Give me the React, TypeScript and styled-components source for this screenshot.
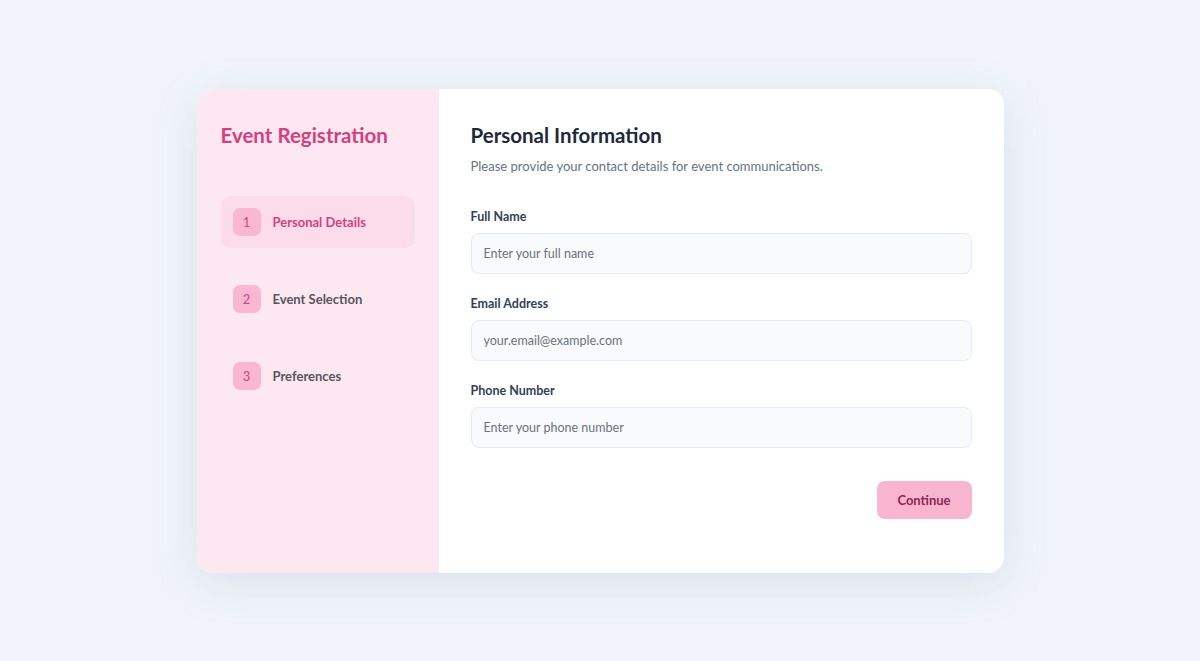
import React from 'react';
import styled, { createGlobalStyle } from 'styled-components';

const GlobalStyle = createGlobalStyle`
  html, body, #root {
    margin: 0;
    height: 100%;
  }
  body {
    background: #f0f4fa;
    font-family: Lato, 'Noto Sans', sans-serif;
  }
  * {
    box-sizing: border-box;
  }
`;

const steps = [
  { n: 1, label: 'Personal Details' },
  { n: 2, label: 'Event Selection' },
  { n: 3, label: 'Preferences' },
];

const fields = [
  { label: 'Full Name', placeholder: 'Enter your full name', type: 'text' },
  { label: 'Email Address', placeholder: 'your.email@example.com', type: 'email' },
  { label: 'Phone Number', placeholder: 'Enter your phone number', type: 'tel' },
];

export default function App() {
  const current = 1;

  return (
    <>
      <GlobalStyle />
      <Page>
        <Card>
          <Sidebar>
            <SideTitle>Event Registration</SideTitle>
            <StepList>
              {steps.map(step => (
                <Step key={step.n} $active={step.n === current}>
                  <Badge>{step.n}</Badge>
                  <StepLabel $active={step.n === current}>{step.label}</StepLabel>
                </Step>
              ))}
            </StepList>
          </Sidebar>
          <Main>
            <Heading>Personal Information</Heading>
            <Subtitle>Please provide your contact details for event communications.</Subtitle>
            <Form onSubmit={e => e.preventDefault()}>
              {fields.map(field => (
                <Field key={field.label}>
                  <Label>{field.label}</Label>
                  <Input type={field.type} placeholder={field.placeholder} />
                </Field>
              ))}
              <Actions>
                <ContinueButton type="submit">Continue</ContinueButton>
              </Actions>
            </Form>
          </Main>
        </Card>
      </Page>
    </>
  );
}

const Page = styled.div`
  min-height: 100%;
  display: flex;
  align-items: center;
  justify-content: center;
`;

const Card = styled.div`
  width: 807px;
  height: 484px;
  display: flex;
  background: #ffffff;
  border-radius: 16px;
  overflow: hidden;
  box-shadow: 0 10px 40px rgba(148, 163, 184, 0.22);
`;

const Sidebar = styled.aside`
  width: 242px;
  flex-shrink: 0;
  background: #fde8f1;
  padding: 32px 24px;
`;

const SideTitle = styled.h1`
  margin: 0;
  font-size: 20.5px;
  line-height: 28px;
  font-weight: 700;
  color: #d63f7e;
`;

const StepList = styled.div`
  margin-top: 47px;
  display: flex;
  flex-direction: column;
  gap: 25px;
`;

const Step = styled.div<{ $active: boolean }>`
  display: flex;
  align-items: center;
  gap: 12px;
  height: 52px;
  padding: 0 12px;
  border-radius: 10px;
  background: ${p => (p.$active ? '#fcdcea' : 'transparent')};
`;

const Badge = styled.span`
  width: 28px;
  height: 28px;
  border-radius: 7px;
  background: #f9b7d1;
  color: #d6437f;
  font-size: 13px;
  display: flex;
  align-items: center;
  justify-content: center;
`;

const StepLabel = styled.span<{ $active: boolean }>`
  font-size: 13px;
  font-weight: 700;
  color: ${p => (p.$active ? '#d63f7e' : '#5a5560')};
`;

const Main = styled.section`
  flex: 1;
  padding: 32px 32px;
`;

const Heading = styled.h2`
  margin: 0;
  font-size: 20.5px;
  line-height: 28px;
  font-weight: 700;
  color: #1e293b;
`;

const Subtitle = styled.p`
  margin: 7px 0 0;
  font-size: 13px;
  line-height: 20px;
  color: #64748b;
`;

const Form = styled.form`
  margin-top: 31px;
  display: flex;
  flex-direction: column;
  gap: 20px;
`;

const Field = styled.div`
  display: flex;
  flex-direction: column;
  gap: 6px;
`;

const Label = styled.label`
  font-size: 12.5px;
  line-height: 20px;
  font-weight: 700;
  color: #334155;
`;

const Input = styled.input`
  height: 41px;
  width: 100%;
  padding: 0 12px;
  border: 1px solid #e5e9f0;
  border-radius: 8px;
  background: #f8fafc;
  font-family: inherit;
  font-size: 12.5px;
  color: #1e293b;
  outline: none;

  &::placeholder {
    color: #6b7280;
  }
`;

const Actions = styled.div`
  display: flex;
  justify-content: flex-end;
  margin-top: 13px;
`;

const ContinueButton = styled.button`
  width: 95px;
  height: 38px;
  border: none;
  border-radius: 8px;
  background: #f9b4cf;
  color: #8f2455;
  font-family: inherit;
  font-size: 13px;
  font-weight: 700;
  cursor: pointer;
`;
